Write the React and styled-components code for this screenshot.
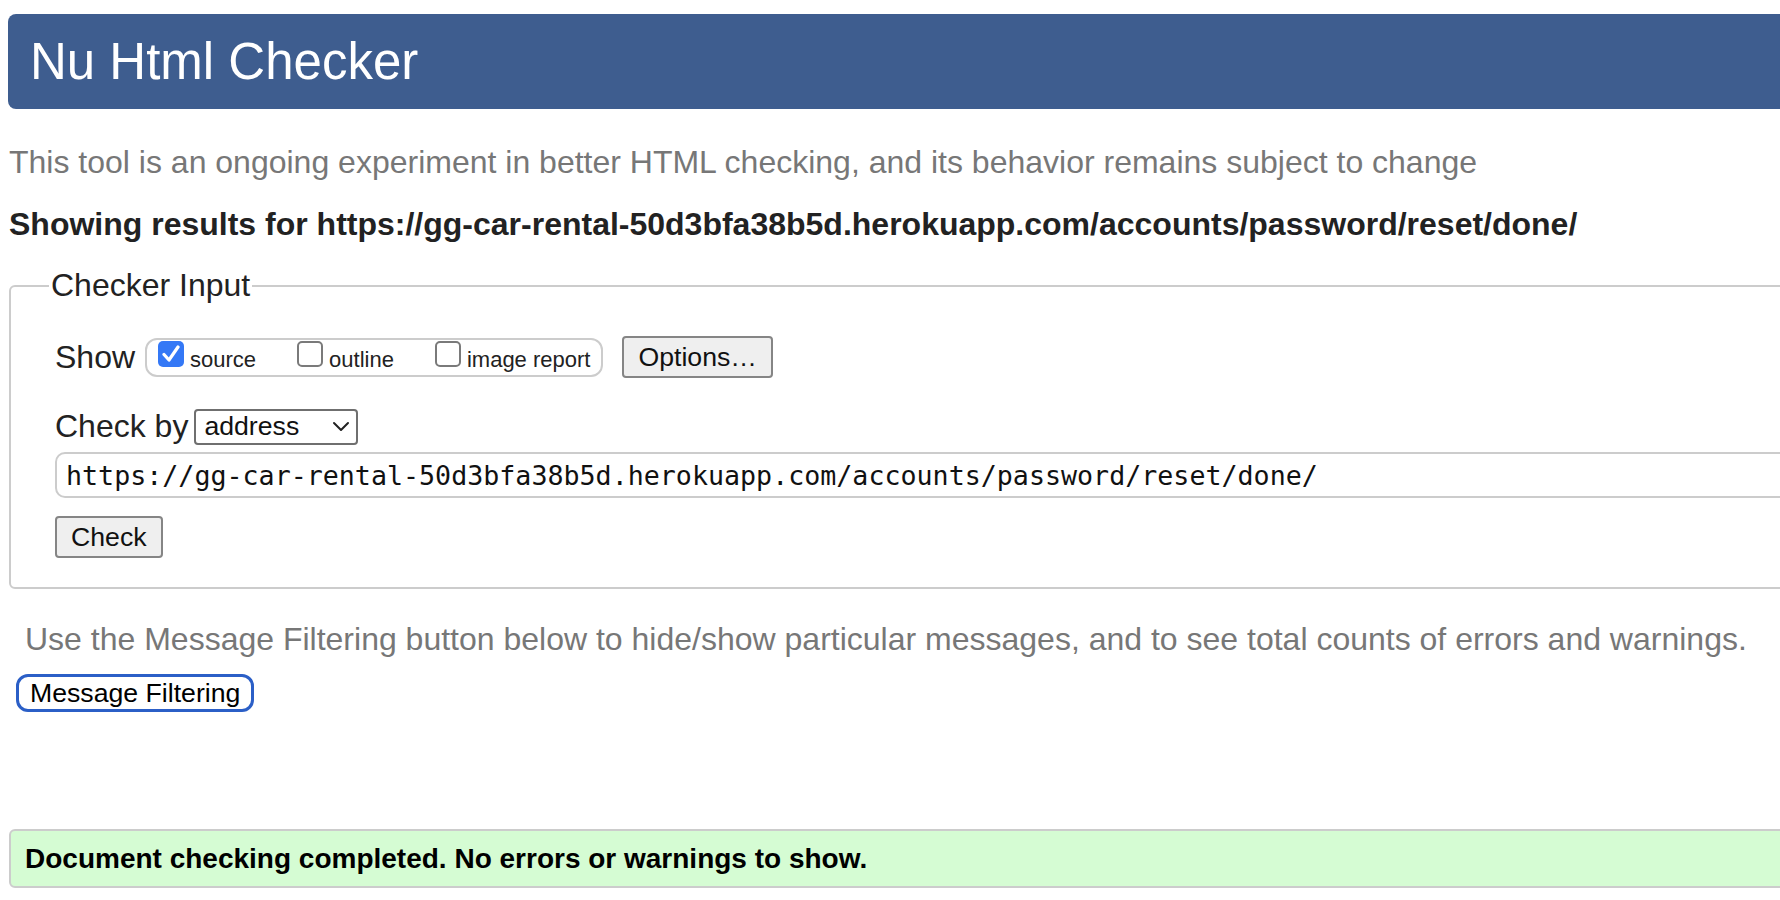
import React from "react";
import styled, { createGlobalStyle } from "styled-components";

const GlobalStyle = createGlobalStyle`
  html, body {
    margin: 0;
    padding: 0;
    background: #fff;
    overflow: hidden;
  }
  body {
    font-family: "Liberation Sans", Arial, Helvetica, sans-serif;
    color: #222;
  }
`;

const Page = styled.div`
  width: 1900px;
  padding: 14px 0 0 8px;
`;

const Header = styled.header`
  height: 95px;
  background: #3e5d8f;
  border-radius: 8px;
  display: flex;
  align-items: center;
  padding-left: 22px;
`;

const Title = styled.h1`
  margin: 0;
  font-size: 51px;
  font-weight: normal;
  color: #fff;
  line-height: 1;
`;

const Intro = styled.p`
  margin: 35px 0 0 1px;
  font-size: 32px;
  line-height: 37px;
  color: #777;
`;

const Results = styled.h2`
  margin: 25px 0 0 1px;
  font-size: 32px;
  line-height: 37px;
  font-weight: bold;
  color: #222;
`;

const Fieldset = styled.fieldset`
  margin: 24px 0 0 1px;
  padding: 32px 0 29px 44px;
  border: 2px solid #ccc;
  border-radius: 6px;
  min-width: 0;
`;

const Legend = styled.legend`
  margin-left: -6px;
  padding: 0 2px;
  font-size: 32px;
  line-height: 37px;
  color: #222;
`;

const Row = styled.div`
  display: flex;
  align-items: center;
  margin-top: ${(p) => p.$top || 0}px;
`;

const Label = styled.span`
  font-size: 32px;
  line-height: 37px;
  color: #222;
`;

const Group = styled.div`
  display: flex;
  align-items: center;
  height: 39px;
  box-sizing: border-box;
  margin-left: 10px;
  padding: 0 11px;
  border: 2px solid #ccc;
  border-radius: 12px;
  gap: 41px;
`;

const Option = styled.label`
  display: flex;
  align-items: center;
  gap: 6px;
  font-size: 22px;
  color: #222;
`;

const OptionText = styled.span`
  padding-top: 5px;
`;

const Box = styled.span`
  width: 26px;
  height: 26px;
  box-sizing: border-box;
  border-radius: 5px;
  display: flex;
  align-items: center;
  justify-content: center;
  background: ${(p) => (p.$checked ? "#3478f6" : "#fff")};
  border: ${(p) => (p.$checked ? "none" : "2px solid #7a7a7a")};
  margin-top: -6px;
`;

const Button = styled.button`
  height: 42px;
  box-sizing: border-box;
  padding: 0 14px;
  font-family: "Liberation Sans", Arial, sans-serif;
  font-size: 26.67px;
  color: #111;
  background: #efefef;
  border: 2px solid #858585;
  border-radius: 4px;
  margin-left: ${(p) => p.$left || 0}px;
`;

const Select = styled.div`
  display: flex;
  align-items: center;
  justify-content: space-between;
  width: 164px;
  height: 36px;
  box-sizing: border-box;
  margin-left: 6px;
  padding: 0 6px 0 8px;
  border: 2px solid #6f6f6f;
  border-radius: 4px;
  font-size: 26.67px;
  color: #111;
`;

const UrlInput = styled.div`
  margin-top: 7px;
  height: 46px;
  box-sizing: border-box;
  display: flex;
  align-items: center;
  padding-left: 9px;
  border: 2px solid #ccc;
  border-radius: 10px;
  font-family: "DejaVu Sans Mono", Menlo, monospace;
  font-size: 26.67px;
  color: #111;
`;

const Hint = styled.p`
  margin: 32px 0 0 17px;
  font-size: 32px;
  line-height: 37px;
  color: #777;
`;

const FilterButton = styled.button`
  margin: 16px 0 0 8px;
  height: 38px;
  box-sizing: border-box;
  padding: 0 11px;
  background: #fff;
  border: 3px solid #2b5fc7;
  border-radius: 12px;
  font-family: "Liberation Sans", Arial, sans-serif;
  font-size: 26.67px;
  color: #000;
`;

const Success = styled.div`
  margin: 117px 0 0 1px;
  height: 59px;
  box-sizing: border-box;
  display: flex;
  align-items: center;
  padding-left: 14px;
  background: #d5fcd3;
  border: 2px solid #ccc;
  border-radius: 6px;
  font-size: 28px;
  font-weight: bold;
  color: #000;
`;

function Check() {
  return (
    <svg width="20" height="18" viewBox="0 0 20 18">
      <path
        d="M3 9.5 L8 15 L17 2"
        fill="none"
        stroke="#fff"
        strokeWidth="3.2"
        strokeLinecap="round"
        strokeLinejoin="round"
      />
    </svg>
  );
}

function Chevron() {
  return (
    <svg width="18" height="11" viewBox="0 0 18 11">
      <path
        d="M2 2 L9 9 L16 2"
        fill="none"
        stroke="#222"
        strokeWidth="2"
        strokeLinecap="round"
        strokeLinejoin="round"
      />
    </svg>
  );
}

const url =
  "https://gg-car-rental-50d3bfa38b5d.herokuapp.com/accounts/password/reset/done/";

function App() {
  return (
    <Page>
      <GlobalStyle />
      <Header>
        <Title>Nu Html Checker</Title>
      </Header>
      <Intro>
        This tool is an ongoing experiment in better HTML checking, and its
        behavior remains subject to change
      </Intro>
      <Results>Showing results for {url}</Results>

      <Fieldset>
        <Legend>Checker Input</Legend>
        <Row>
          <Label>Show</Label>
          <Group>
            <Option>
              <Box $checked>
                <Check />
              </Box>
              <OptionText>source</OptionText>
            </Option>
            <Option>
              <Box />
              <OptionText>outline</OptionText>
            </Option>
            <Option>
              <Box />
              <OptionText>image report</OptionText>
            </Option>
          </Group>
          <Button $left={19}>Options…</Button>
        </Row>
        <Row $top={30}>
          <Label>Check by</Label>
          <Select>
            address
            <Chevron />
          </Select>
        </Row>
        <UrlInput>{url}</UrlInput>
        <Row $top={18}>
          <Button>Check</Button>
        </Row>
      </Fieldset>

      <Hint>
        Use the Message Filtering button below to hide/show particular
        messages, and to see total counts of errors and warnings.
      </Hint>
      <FilterButton>Message Filtering</FilterButton>

      <Success>Document checking completed. No errors or warnings to show.</Success>
    </Page>
  );
}

export default App;
